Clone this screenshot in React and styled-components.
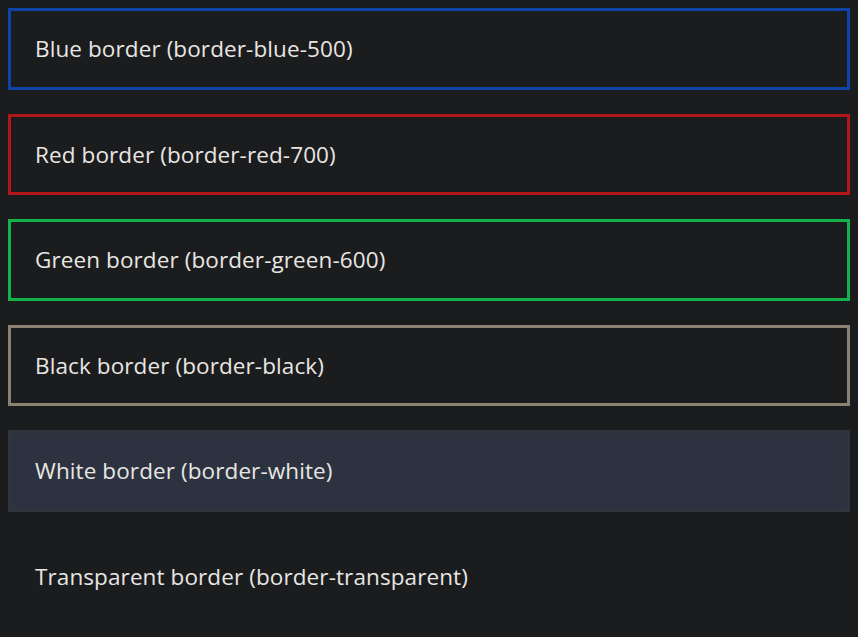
import React from "react";
import styled, { createGlobalStyle } from "styled-components";

const GlobalStyle = createGlobalStyle`
  body {
    margin: 8px;
    background-color: #1b1c1e;
    color: #e8e6e3;
    font-family: "Open Sans", "Noto Sans", sans-serif;
  }
`;

const List = styled.div`
  display: flex;
  flex-direction: column;
  gap: 24px;
`;

const Box = styled.div`
  border: 3px solid ${(p) => p.$border};
  background-color: ${(p) => p.$bg || "transparent"};
  padding: 24px;
  font-size: 22.5px;
  line-height: 27.6px;
  letter-spacing: 0.1px;
`;

const boxes = [
  { text: "Blue border (border-blue-500)", border: "#0d44a6" },
  { text: "Red border (border-red-700)", border: "#b3161a" },
  { text: "Green border (border-green-600)", border: "#14b24c" },
  { text: "Black border (border-black)", border: "#8c8273" },
  { text: "White border (border-white)", border: "#30343b", bg: "#2c323f" },
  { text: "Transparent border (border-transparent)", border: "transparent" },
];

export default function App() {
  return (
    <>
      <GlobalStyle />
      <List>
        {boxes.map((b) => (
          <Box key={b.text} $border={b.border} $bg={b.bg}>
            {b.text}
          </Box>
        ))}
      </List>
    </>
  );
}
